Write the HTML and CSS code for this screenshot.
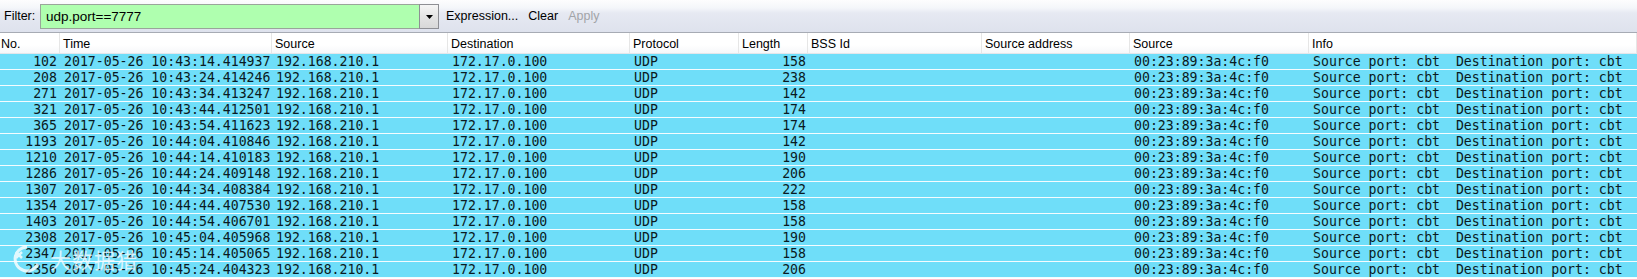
FILE: index.html
```html
<!DOCTYPE html>
<html>
<head>
<meta charset="utf-8">
<link rel="stylesheet" href="styles.css">
</head>
<body>
<div class="app">
  <div class="toolbar">
    <span class="label">Filter:</span>
    <div class="combo">
      <div class="input">udp.port==7777</div>
      <div class="drop"><svg width="7" height="4" viewBox="0 0 7 4"><path d="M0 0h7L3.5 4z" fill="#000"/></svg></div>
    </div>
    <span class="btn">Expression...</span>
    <span class="btn">Clear</span>
    <span class="btn disabled">Apply</span>
  </div>
  <div class="list">
    <div class="row head">
      <div class="c no">No.</div><div class="c">Time</div><div class="c">Source</div><div class="c">Destination</div><div class="c">Protocol</div><div class="c">Length</div><div class="c">BSS Id</div><div class="c">Source address</div><div class="c">Source</div><div class="c">Info</div>
    </div>
    <div class="row pkt"><div class="c r">102</div><div class="c">2017-05-26 10:43:14.414937</div><div class="c">192.168.210.1</div><div class="c">172.17.0.100</div><div class="c">UDP</div><div class="c r">158</div><div class="c"></div><div class="c"></div><div class="c">00:23:89:3a:4c:f0</div><div class="c">Source port: cbt  Destination port: cbt</div></div>
    <div class="row pkt"><div class="c r">208</div><div class="c">2017-05-26 10:43:24.414246</div><div class="c">192.168.210.1</div><div class="c">172.17.0.100</div><div class="c">UDP</div><div class="c r">238</div><div class="c"></div><div class="c"></div><div class="c">00:23:89:3a:4c:f0</div><div class="c">Source port: cbt  Destination port: cbt</div></div>
    <div class="row pkt"><div class="c r">271</div><div class="c">2017-05-26 10:43:34.413247</div><div class="c">192.168.210.1</div><div class="c">172.17.0.100</div><div class="c">UDP</div><div class="c r">142</div><div class="c"></div><div class="c"></div><div class="c">00:23:89:3a:4c:f0</div><div class="c">Source port: cbt  Destination port: cbt</div></div>
    <div class="row pkt"><div class="c r">321</div><div class="c">2017-05-26 10:43:44.412501</div><div class="c">192.168.210.1</div><div class="c">172.17.0.100</div><div class="c">UDP</div><div class="c r">174</div><div class="c"></div><div class="c"></div><div class="c">00:23:89:3a:4c:f0</div><div class="c">Source port: cbt  Destination port: cbt</div></div>
    <div class="row pkt"><div class="c r">365</div><div class="c">2017-05-26 10:43:54.411623</div><div class="c">192.168.210.1</div><div class="c">172.17.0.100</div><div class="c">UDP</div><div class="c r">174</div><div class="c"></div><div class="c"></div><div class="c">00:23:89:3a:4c:f0</div><div class="c">Source port: cbt  Destination port: cbt</div></div>
    <div class="row pkt"><div class="c r">1193</div><div class="c">2017-05-26 10:44:04.410846</div><div class="c">192.168.210.1</div><div class="c">172.17.0.100</div><div class="c">UDP</div><div class="c r">142</div><div class="c"></div><div class="c"></div><div class="c">00:23:89:3a:4c:f0</div><div class="c">Source port: cbt  Destination port: cbt</div></div>
    <div class="row pkt"><div class="c r">1210</div><div class="c">2017-05-26 10:44:14.410183</div><div class="c">192.168.210.1</div><div class="c">172.17.0.100</div><div class="c">UDP</div><div class="c r">190</div><div class="c"></div><div class="c"></div><div class="c">00:23:89:3a:4c:f0</div><div class="c">Source port: cbt  Destination port: cbt</div></div>
    <div class="row pkt"><div class="c r">1286</div><div class="c">2017-05-26 10:44:24.409148</div><div class="c">192.168.210.1</div><div class="c">172.17.0.100</div><div class="c">UDP</div><div class="c r">206</div><div class="c"></div><div class="c"></div><div class="c">00:23:89:3a:4c:f0</div><div class="c">Source port: cbt  Destination port: cbt</div></div>
    <div class="row pkt"><div class="c r">1307</div><div class="c">2017-05-26 10:44:34.408384</div><div class="c">192.168.210.1</div><div class="c">172.17.0.100</div><div class="c">UDP</div><div class="c r">222</div><div class="c"></div><div class="c"></div><div class="c">00:23:89:3a:4c:f0</div><div class="c">Source port: cbt  Destination port: cbt</div></div>
    <div class="row pkt"><div class="c r">1354</div><div class="c">2017-05-26 10:44:44.407530</div><div class="c">192.168.210.1</div><div class="c">172.17.0.100</div><div class="c">UDP</div><div class="c r">158</div><div class="c"></div><div class="c"></div><div class="c">00:23:89:3a:4c:f0</div><div class="c">Source port: cbt  Destination port: cbt</div></div>
    <div class="row pkt"><div class="c r">1403</div><div class="c">2017-05-26 10:44:54.406701</div><div class="c">192.168.210.1</div><div class="c">172.17.0.100</div><div class="c">UDP</div><div class="c r">158</div><div class="c"></div><div class="c"></div><div class="c">00:23:89:3a:4c:f0</div><div class="c">Source port: cbt  Destination port: cbt</div></div>
    <div class="row pkt"><div class="c r">2308</div><div class="c">2017-05-26 10:45:04.405968</div><div class="c">192.168.210.1</div><div class="c">172.17.0.100</div><div class="c">UDP</div><div class="c r">190</div><div class="c"></div><div class="c"></div><div class="c">00:23:89:3a:4c:f0</div><div class="c">Source port: cbt  Destination port: cbt</div></div>
    <div class="row pkt"><div class="c r">2347</div><div class="c">2017-05-26 10:45:14.405065</div><div class="c">192.168.210.1</div><div class="c">172.17.0.100</div><div class="c">UDP</div><div class="c r">158</div><div class="c"></div><div class="c"></div><div class="c">00:23:89:3a:4c:f0</div><div class="c">Source port: cbt  Destination port: cbt</div></div>
    <div class="row pkt"><div class="c r">2356</div><div class="c">2017-05-26 10:45:24.404323</div><div class="c">192.168.210.1</div><div class="c">172.17.0.100</div><div class="c">UDP</div><div class="c r">206</div><div class="c"></div><div class="c"></div><div class="c">00:23:89:3a:4c:f0</div><div class="c">Source port: cbt  Destination port: cbt</div></div>
  </div>
  <div class="watermark">
    <svg width="34" height="30" viewBox="0 0 34 30"><path d="M17 3a12 12 0 1 0 11 17" fill="none" stroke="#fff" stroke-width="3"/><path d="M6 8l6 6M12 8l-6 6" stroke="#fff" stroke-width="2.5"/></svg>
    <span>大数据猎</span>
  </div>
</div>
</body>
</html>
```

FILE: styles.css
```css
html, body {
  margin: 0;
  padding: 0;
  background: #ffffff;
}
.app {
  position: relative;
  width: 1637px;
  height: 279px;
  overflow: hidden;
  font-family: "Liberation Sans", Arial, sans-serif;
  color: #000;
}
.toolbar {
  height: 32px;
  border-bottom: 1px solid #a7abb4;
  background: linear-gradient(to bottom, #fdfdfe 0px, #f4f6fa 8px, #e6e9f2 13px, #dee2ed 32px);
  display: flex;
  align-items: center;
  font-size: 12.5px;
}
.label {
  margin-left: 4px;
  width: 36px;
}
.combo {
  display: flex;
  height: 25px;
  margin-top: 1px;
}
.input {
  width: 373px;
  background: #afffaf;
  border: 1px solid #9aa59a;
  border-right: none;
  font-size: 13.5px;
  line-height: 23px;
  padding-left: 5px;
}
.drop {
  width: 18px;
  border: 1px solid #8e8f94;
  background: linear-gradient(to bottom, #f6f6f6, #e4e4e4 50%, #d8d8d8);
  display: flex;
  align-items: center;
  justify-content: center;
}
.btn {
  margin-left: 7px;
  margin-right: 2px;
}
.btn + .btn {
  margin-left: 8px;
}
.btn.disabled {
  color: #a2a4a8;
}
.row {
  display: grid;
  grid-template-columns: 60px 212px 176px 182px 109px 69px 174px 148px 179px 1fr;
}
.head {
  height: 20px;
  border-bottom: 1px solid #e4e6ea;
  background: linear-gradient(to bottom, #ffffff 0, #ffffff 60%, #f6f7f9 100%);
  font-size: 12.5px;
}
.head .c {
  border-right: 1px solid #e6e6e6;
  padding: 3px 0 0 3px;
  line-height: 17px;
}
.head .c.no {
  padding-left: 1px;
}
.pkt {
  height: 15px;
  background: #6fdef9;
  border-bottom: 1px solid #f4fcff;
  font-family: "DejaVu Sans Mono", "Liberation Mono", monospace;
  font-size: 13.2px;
  color: #0a1a22;
}
.pkt .c {
  line-height: 16px;
  padding-left: 4px;
  white-space: pre;
  overflow: visible;
}
.pkt .c.r {
  text-align: right;
  padding-left: 0;
  padding-right: 3px;
}
.pkt .c:nth-child(6) {
  padding-right: 2px;
}
.watermark {
  position: absolute;
  left: 10px;
  top: 244px;
  display: flex;
  align-items: center;
  gap: 6px;
  opacity: 0.8;
  color: #f4fbff;
  font-family: "Noto Sans CJK SC", sans-serif;
  font-size: 21px;
  line-height: 30px;
  letter-spacing: 1px;
  pointer-events: none;
}
```
